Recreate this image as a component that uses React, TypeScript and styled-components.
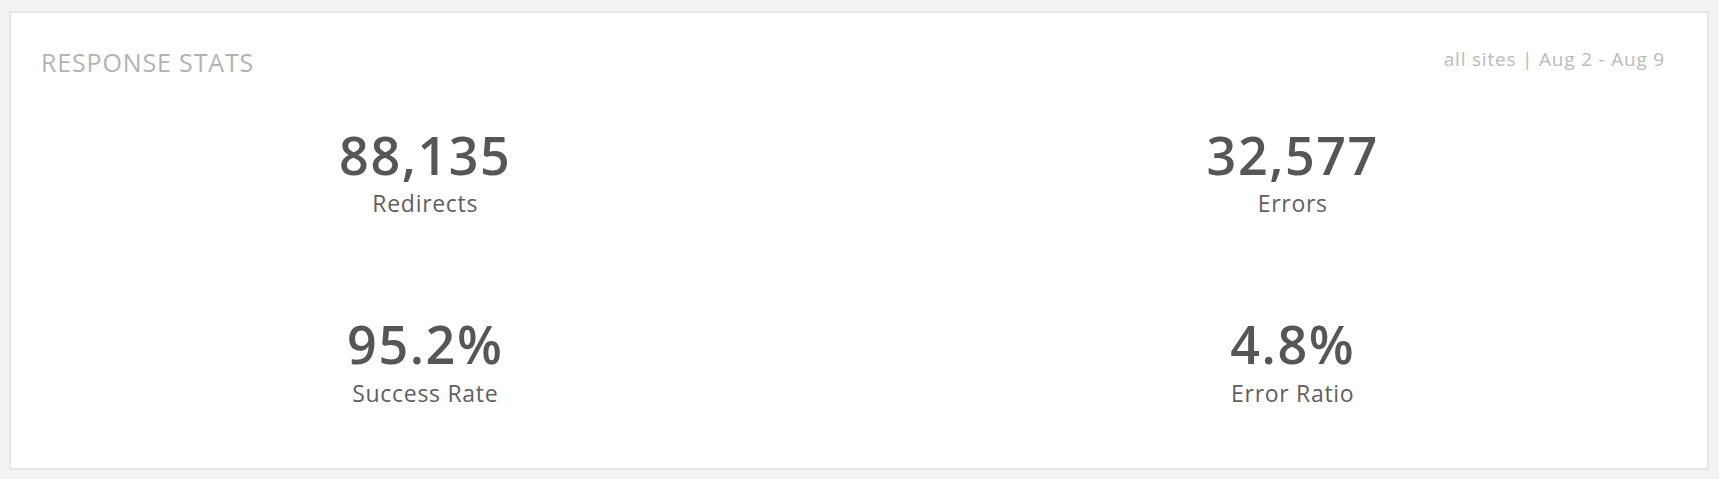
import styled, { createGlobalStyle } from 'styled-components';

const GlobalStyle = createGlobalStyle`
  html, body {
    margin: 0;
    padding: 0;
    background: #f3f3f3;
  }

  body {
    font-family: 'Open Sans', 'Liberation Sans', sans-serif;
  }
`;

const Page = styled.div`
  padding: 11px 10px 9px 9px;
`;

const Panel = styled.section`
  background: #ffffff;
  border: 2px solid #e6e6e6;
  padding: 37px 42px 63.5px 30px;
`;

const Header = styled.header`
  display: flex;
  justify-content: space-between;
  align-items: flex-start;
`;

const Title = styled.h2`
  margin: 0;
  font-size: 25px;
  line-height: 25px;
  font-weight: 400;
  letter-spacing: 0.85px;
  color: #b3b3b3;
  text-transform: uppercase;
`;

const Range = styled.div`
  font-size: 19px;
  line-height: 19px;
  letter-spacing: 0.8px;
  color: #bababa;
`;

const StatsGrid = styled.div`
  display: grid;
  grid-template-columns: 1fr 1fr;
  column-gap: 39px;
  row-gap: 102.3px;
  margin: 53.7px -42px 0 -30px;
`;

const Stat = styled.div`
  display: flex;
  flex-direction: column;
  align-items: center;
  text-align: center;
`;

const Value = styled.div`
  font-size: 52px;
  line-height: 52px;
  font-weight: 600;
  letter-spacing: 1.6px;
  color: #565656;
`;

const Label = styled.div`
  margin-top: 11.8px;
  font-size: 23px;
  line-height: 23px;
  letter-spacing: 0.7px;
  color: #5f5f5f;
`;

const stats = [
  { value: '88,135', label: 'Redirects' },
  { value: '32,577', label: 'Errors' },
  { value: '95.2%', label: 'Success Rate' },
  { value: '4.8%', label: 'Error Ratio' },
];

export default function App() {
  return (
    <>
      <GlobalStyle />
      <Page>
        <Panel>
          <Header>
            <Title>Response Stats</Title>
            <Range>all sites | Aug 2 - Aug 9</Range>
          </Header>

          <StatsGrid>
            {stats.map((stat) => (
              <Stat key={stat.label}>
                <Value>{stat.value}</Value>
                <Label>{stat.label}</Label>
              </Stat>
            ))}
          </StatsGrid>
        </Panel>
      </Page>
    </>
  );
}
